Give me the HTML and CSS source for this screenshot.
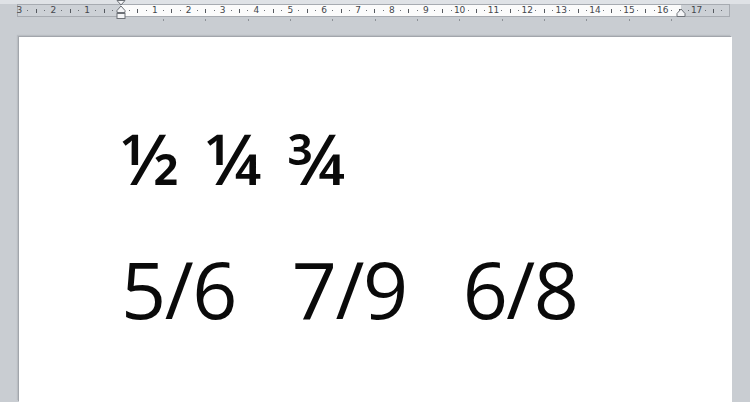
FILE: index.html
```html
<!DOCTYPE html>
<html>
<head>
<meta charset="utf-8">
<link rel="stylesheet" href="styles.css">
</head>
<body>
<div class="app">
  <div class="topstrip"></div>
  <div class="rulerzone">
    <div class="ruler">
      <div class="marks">
        <div class="cm"><span class="n">3</span><span class="d"></span><span class="t"></span><span class="d"></span></div>
        <div class="cm"><span class="n">2</span><span class="d"></span><span class="t"></span><span class="d"></span></div>
        <div class="cm"><span class="n">1</span><span class="d"></span><span class="t"></span><span class="d"></span></div>
        <div class="cm"><span class="n"></span><span class="d"></span><span class="t"></span><span class="d"></span></div>
        <div class="cm"><span class="n">1</span><span class="d"></span><span class="t"></span><span class="d"></span></div>
        <div class="cm"><span class="n">2</span><span class="d"></span><span class="t"></span><span class="d"></span></div>
        <div class="cm"><span class="n">3</span><span class="d"></span><span class="t"></span><span class="d"></span></div>
        <div class="cm"><span class="n">4</span><span class="d"></span><span class="t"></span><span class="d"></span></div>
        <div class="cm"><span class="n">5</span><span class="d"></span><span class="t"></span><span class="d"></span></div>
        <div class="cm"><span class="n">6</span><span class="d"></span><span class="t"></span><span class="d"></span></div>
        <div class="cm"><span class="n">7</span><span class="d"></span><span class="t"></span><span class="d"></span></div>
        <div class="cm"><span class="n">8</span><span class="d"></span><span class="t"></span><span class="d"></span></div>
        <div class="cm"><span class="n">9</span><span class="d"></span><span class="t"></span><span class="d"></span></div>
        <div class="cm"><span class="n">10</span><span class="d"></span><span class="t"></span><span class="d"></span></div>
        <div class="cm"><span class="n">11</span><span class="d"></span><span class="t"></span><span class="d"></span></div>
        <div class="cm"><span class="n">12</span><span class="d"></span><span class="t"></span><span class="d"></span></div>
        <div class="cm"><span class="n">13</span><span class="d"></span><span class="t"></span><span class="d"></span></div>
        <div class="cm"><span class="n">14</span><span class="d"></span><span class="t"></span><span class="d"></span></div>
        <div class="cm"><span class="n">15</span><span class="d"></span><span class="t"></span><span class="d"></span></div>
        <div class="cm"><span class="n">16</span><span class="d"></span><span class="t"></span><span class="d"></span></div>
        <div class="cm"><span class="n">17</span><span class="d"></span><span class="t"></span><span class="d"></span></div>
      </div>
      <svg class="indent-left" width="10" height="22" viewBox="0 0 10 22">
        <path d="M1 0.5 H9 L5 5 Z" fill="#f4f5f7" stroke="#6d7177" stroke-width="1"/>
        <path d="M5 6 L9 10.5 V12.5 H1 V10.5 Z" fill="#f4f5f7" stroke="#6d7177" stroke-width="1"/>
        <rect x="1" y="13.5" width="8" height="5" fill="#f4f5f7" stroke="#6d7177" stroke-width="1"/>
      </svg>
      <svg class="indent-right" width="10" height="10" viewBox="0 0 10 10">
        <path d="M5 1 L9 5.5 V8.5 H1 V5.5 Z" fill="#f4f5f7" stroke="#6d7177" stroke-width="1"/>
      </svg>
    </div>
    <div class="tabs">
      <span></span><span></span><span></span><span></span><span></span><span></span><span></span><span></span><span></span><span></span><span></span><span></span><span></span>
    </div>
  </div>
  <div class="page">
    <div class="line line1">
      <span>½</span><span>¼</span><span>¾</span>
    </div>
    <div class="line line2">
      <span>5/6</span><span>7/9</span><span>6/8</span>
    </div>
  </div>
</div>
</body>
</html>
```
FILE: styles.css
```css
html, body {
  margin: 0;
  padding: 0;
  background: #ffffff;
}
.app {
  width: 750px;
  height: 402px;
  background: #c9cdd2;
  overflow: hidden;
  display: flex;
  flex-direction: column;
}
.topstrip {
  height: 4px;
  background: #dfe2e6;
  flex: none;
}
.rulerzone {
  height: 33px;
  flex: none;
  position: relative;
}
.ruler {
  position: relative;
  margin-left: 17px;
  width: 713px;
  height: 13px;
  box-sizing: border-box;
  border: 1px solid #a7abb1;
  background: linear-gradient(to right, #cdd1d6 0, #cdd1d6 103px, #fbfbfb 103px, #fbfbfb 663px, #cdd1d6 663px);
  overflow: visible;
}
.marks {
  display: grid;
  grid-template-columns: repeat(21, 33.87px);
  margin-left: -2.8px;
  height: 11px;
  overflow: hidden;
}
.cm {
  display: grid;
  grid-template-columns: repeat(4, 8.4675px);
  align-items: center;
  justify-items: center;
  height: 11px;
}
.n {
  font-family: "DejaVu Sans", sans-serif;
  font-size: 9px;
  line-height: 11px;
  color: #44474c;
}
.d {
  width: 1px;
  height: 1px;
  background: #6b6f75;
}
.t {
  width: 1px;
  height: 4px;
  background: #55595f;
}
.indent-left {
  position: absolute;
  left: 98px;
  top: -5px;
}
.indent-right {
  position: absolute;
  left: 658px;
  top: 3px;
}
.tabs {
  display: flex;
  gap: 41.34px;
  margin-left: 163px;
  margin-top: 2px;
}
.tabs span {
  width: 1px;
  height: 2px;
  background: #8d9197;
}
.page {
  margin-left: 19px;
  width: 713px;
  flex: 1;
  background: #ffffff;
  box-shadow: -1px -1px 0 #a2a6ac, -2px -2px 1px #b9bdc2;
  padding-left: 102px;
  box-sizing: border-box;
  font-family: "Open Sans", sans-serif;
  color: #0a0a0a;
}
.line {
  display: flex;
  white-space: pre;
}
.line1 {
  font-size: 71px;
  font-weight: 600;
  line-height: 80px;
  margin-top: 81px;
  gap: 27px;
  letter-spacing: -1px;
}
.line2 {
  font-size: 79px;
  font-weight: 500;
  line-height: 80px;
  margin-top: 51px;
  gap: 56px;
  letter-spacing: -1.5px;
}
```
